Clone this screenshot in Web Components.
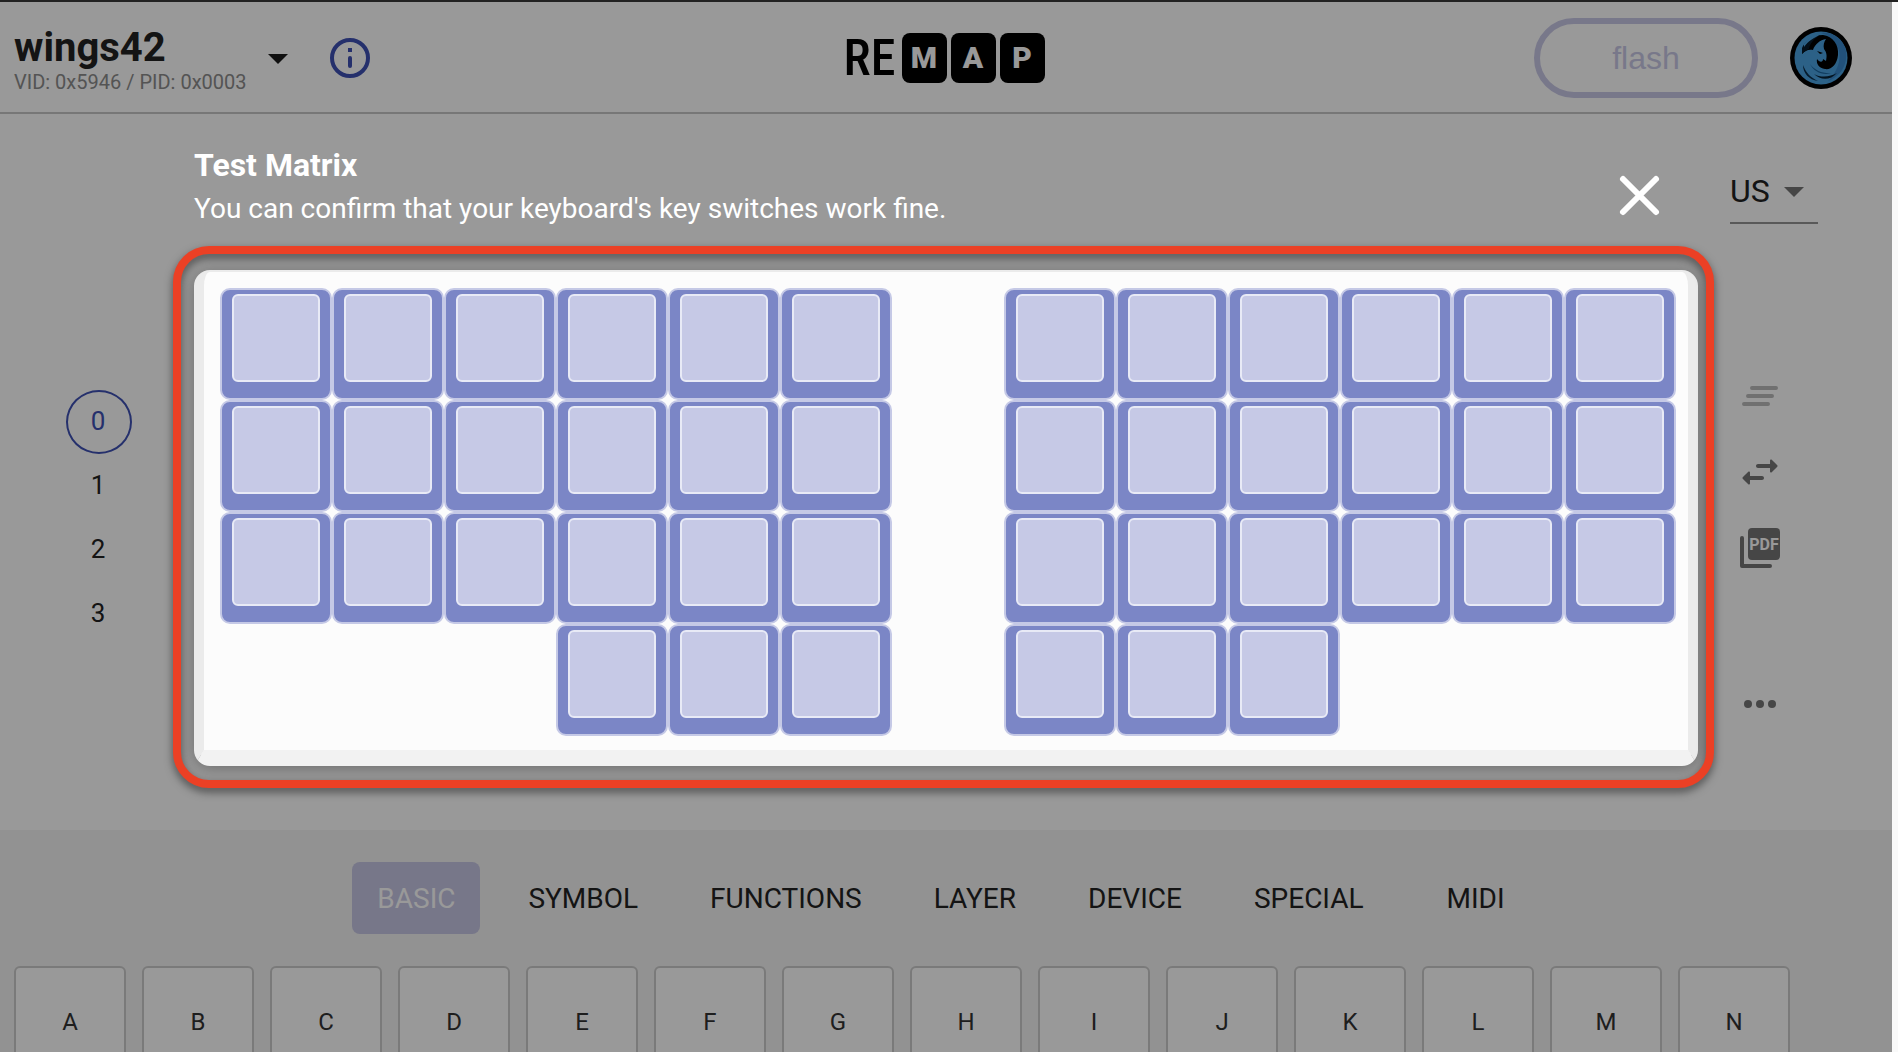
<!DOCTYPE html>
<html lang="en">
<head>
<meta charset="utf-8">
<title>Remap</title>
<style>
  html, body { margin: 0; height: 100%; background: #f9f9f9; font-family: Roboto, "Liberation Sans", sans-serif; color: #222; }
</style>
</head>
<body>
<remap-app></remap-app>

<script>
const define = (name, html, setup) => {
  const template = document.createElement('template');
  template.innerHTML = html;
  customElements.define(name, class extends HTMLElement {
    connectedCallback() {
      if (this.shadowRoot) return;
      this.attachShadow({ mode: 'open' }).append(template.content.cloneNode(true));
      if (setup) setup(this, this.shadowRoot);
    }
  });
};

define('remap-logo', `
<style>
  :host { display: flex; align-items: center; gap: 4px; color: #000; font-weight: 700; }
  .re { width: 54px; font: 500 50px/50px "Roboto Condensed", "Liberation Sans Narrow", sans-serif; }
  .tile { display: grid; place-items: center; width: 45px; height: 50px; border-radius: 8px; background: #000; color: #fff; font-size: 30px; line-height: 50px; font-weight: 900; }
</style>
<span class="re">RE</span><span class="tile">M</span><span class="tile">A</span><span class="tile">P</span>`);

define('user-avatar', `
<style>
  :host { display: block; }
  button { display: block; border: 0; padding: 0; background: none; border-radius: 50%; }
  svg { display: block; }
</style>
<button aria-label="Account">
<svg width="62" height="62" viewBox="0 0 62 62">
  <circle cx="31" cy="31" r="31" fill="#000"/>
  <circle cx="31" cy="31" r="26.5" fill="#4aa2e2"/>
  <path d="M31 6C42 4 54 12 56 24C58 38 50 50 38 54C47 45 51 34 49 24C46 13 38 8 31 6Z" fill="#3a88cc"/>
  <path d="M12 27C13 16 22 8 33 8C43 9 49 18 48 28C47 38 41 43 35 42C29 41 26 37 27 32C29 35 33 36 33 32L36 34C37 29 37 26 34 22C33 18 34 15 36 12C30 13 25 17 23 23C18 22 15 24 12 27Z" fill="#000"/>
  <path d="M12 21C15 14 22 9 30 8C24 12 20 16 19 22C16 23 14 25 12 27Z" fill="#061a2a"/>
  <path d="M27 24l6 2l-3 1z" fill="#000"/>
  <path d="M14 17C18 11 24 8 31 7C24 11 18 14 14 20Z" fill="#4aa2e2"/>
  <path d="M24 47C30 53 40 54 47 46C40 50 31 51 24 47Z" fill="#072236"/>
  <path d="M13 38C16 46 21 51 28 54C19 53 13 46 13 38Z" fill="#0b2f4c"/>
  <path d="M20 37C24 45 33 49 42 46C34 47 25 44 20 37Z" fill="#1c669f"/>
</svg></button>`);

define('app-header', `
<style>
  :host { display: grid; grid-template-columns: 1fr auto 1fr; align-items: center; box-sizing: border-box; height: 112px; padding: 2px 18px 0 14px; border-bottom: 2px solid #c6c6c6; background: #fff; }
  .device, .actions { display: flex; align-items: center; }
  .actions { justify-content: flex-end; gap: 32px; padding-right: 22px; }
  button { border: 0; padding: 0; background: none; font: inherit; color: inherit; text-align: left; }
  .picker { display: flex; align-items: center; }
  .names { display: block; min-width: 240px; padding-top: 4px; }
  .name { display: block; font-size: 40px; line-height: 44px; font-weight: 700; }
  .ids { display: block; font-size: 20px; line-height: 24px; color: #8c8c8c; }
  .info { margin-left: 24px; color: #3f51b5; }
  svg { display: block; }
  .flash { width: 224px; height: 80px; border: 6px solid #c9c8e6; border-radius: 40px; color: #c9c8e6; font: 32px/40px "Liberation Sans", Arial, sans-serif; text-align: center; }
</style>
<div class="device">
  <button class="picker">
    <span class="names"><span class="name">wings42</span><span class="ids">VID: 0x5946 / PID: 0x0003</span></span>
    <svg width="48" height="48" viewBox="0 0 24 24"><path d="M7 10l5 5 5-5z" fill="#1c1c1c"/></svg>
  </button>
  <button class="info" aria-label="Information">
    <svg width="48" height="48" viewBox="0 0 24 24" fill="none" stroke="currentColor" stroke-width="2"><circle cx="12" cy="12" r="9"/><path d="M12 12v4" stroke-linecap="round"/><path d="M11 8h2"/></svg>
  </button>
</div>
<remap-logo></remap-logo>
<div class="actions">
  <button class="flash">flash</button>
  <user-avatar></user-avatar>
</div>`);

define('layer-list', `
<style>
  :host { display: flex; flex-direction: column; }
  button { box-sizing: border-box; width: 66px; height: 64px; padding: 0 2px 2px 0; border: 2px solid transparent; border-radius: 50%; background: none; font: 26px/32px Roboto, sans-serif; color: #222; }
  button[aria-pressed=true] { border-color: #3f51b5; color: #3f51b5; }
</style>
<button aria-pressed="true">0</button><button>1</button><button>2</button><button>3</button>`);

define('side-tools', `
<style>
  :host { display: flex; flex-direction: column; width: 88px; }
  .lang { display: grid; align-items: center; margin-bottom: 148px; border-bottom: 2px solid #949494; }
  select, .lang svg { grid-area: 1 / 1; }
  select { appearance: none; width: 100%; height: 62px; padding: 0; border: 0; background: none; color: #222; font: 32px/40px Roboto, sans-serif; }
  .lang svg { justify-self: end; pointer-events: none; }
  .tools { display: flex; flex-direction: column; gap: 28px; padding-left: 6px; color: #757575; }
  button { display: block; width: 48px; height: 48px; border: 0; padding: 0; background: none; color: inherit; }
  button:disabled { color: #bbb; }
  .more { margin-top: 80px; }
  svg { display: block; }
</style>
<label class="lang">
  <select aria-label="Layout language"><option>US</option></select>
  <svg width="48" height="48" viewBox="0 0 24 24"><path d="M7 10l5 5 5-5z" fill="#757575"/></svg>
</label>
<div class="tools">
  <button disabled aria-label="Clear all"><svg width="48" height="48" viewBox="0 0 24 24" stroke="currentColor" stroke-width="2" stroke-linecap="round"><path d="M8 8h12M6 12h12M4 16h12"/></svg></button>
  <button aria-label="Swap"><svg width="48" height="48" viewBox="0 0 24 24" fill="currentColor"><path d="M6.14 11.86l-2.78 2.79c-.19.2-.19.51 0 .71l2.78 2.79c.31.32.85.09.85-.35V16H13c.55 0 1-.45 1-1s-.45-1-1-1H6.99v-1.79c0-.45-.54-.67-.85-.35zm14.51-3.21l-2.78-2.79c-.31-.32-.85-.09-.85.35V8H11c-.55 0-1 .45-1 1s.45 1 1 1h6.01v1.79c0 .45.54.67.85.35l2.78-2.79c.2-.19.2-.51.01-.7z"/></svg></button>
  <button aria-label="Export PDF"><svg width="48" height="48" viewBox="0 0 48 48"><rect x="12" y="4" width="32" height="32" rx="4" fill="currentColor"/><path d="M6 14V42H34" fill="none" stroke="currentColor" stroke-width="4" stroke-linecap="round" stroke-linejoin="round"/><text x="28" y="26" text-anchor="middle" font-family="Roboto" font-weight="700" font-size="16" fill="#fff">PDF</text></svg></button>
  <button class="more" aria-label="More"><svg width="48" height="48" viewBox="0 0 24 24" fill="currentColor"><circle cx="6" cy="12" r="2"/><circle cx="12" cy="12" r="2"/><circle cx="18" cy="12" r="2"/></svg></button>
</div>`);

define('category-tabs', `
<style>
  :host { display: flex; justify-content: center; gap: 24px; }
  button { min-width: 128px; height: 72px; padding: 2px 24px 0; border: 0; border-radius: 8px; background: none; color: #222; font: 28px/48px Roboto, sans-serif; }
  button[aria-selected=true] { background: #c6c6e4; color: #fff; }
</style>`, (host, root) => {
  host.setAttribute('role', 'tablist');
  ['BASIC', 'SYMBOL', 'FUNCTIONS', 'LAYER', 'DEVICE', 'SPECIAL', 'MIDI'].forEach((label, i) => {
    const tab = document.createElement('button');
    tab.setAttribute('role', 'tab');
    tab.setAttribute('aria-selected', i === 0);
    tab.textContent = label;
    root.append(tab);
  });
});

define('key-cap', `
<style>
  :host { display: block; }
  button { display: block; width: 112px; height: 112px; padding: 0; border: 2px solid #ccc; border-radius: 6px; background: #fff; color: #333; font: 24px/32px Roboto, sans-serif; }
</style>
<button><slot></slot></button>`);

define('key-palette', `
<style>
  :host { display: flex; flex-direction: column; gap: 32px; box-sizing: border-box; padding: 32px 14px 0; background: #f3f3f3; overflow: hidden; }
  .keys { display: flex; gap: 16px; }
</style>
<category-tabs></category-tabs>
<div class="keys"></div>`, (host, root) => {
  const keys = root.querySelector('.keys');
  for (const letter of 'ABCDEFGHIJKLMN') {
    const key = document.createElement('key-cap');
    key.textContent = letter;
    keys.append(key);
  }
});

define('switch-key', `
<style>
  :host { display: block; box-sizing: border-box; width: 112px; height: 112px; padding: 4px 10px; border: 2px solid #c5c9e6; border-radius: 10px; background: #7b86c6; }
  span { display: block; box-sizing: border-box; height: 88px; border: 2px solid #e8eaf6; border-radius: 6px; background: #c6c9e6; }
</style>
<span></span>`);

define('key-matrix', `
<style>
  :host { display: grid; position: relative; grid-template-columns: repeat(13, 112px); grid-auto-rows: 112px; padding: 16px 12px 14px 16px; border: solid; border-width: 2px 10px 16px; border-color: #ebebeb #ebebeb #f2f2f2; border-radius: 16px; background: #fcfcfc; box-shadow: 0 2px 16px rgba(0, 0, 0, .3); }
  .outline { position: absolute; inset: -26px -26px -38px -31px; border: 8px solid #eb4025; border-radius: 36px; filter: drop-shadow(0 4px 4px rgba(0, 0, 0, .5)); pointer-events: none; }
</style>
<div class="outline"></div>`, (host, root) => {
  const rows = ['111111.111111', '111111.111111', '111111.111111', '...111.111...'];
  rows.forEach((row, r) => [...row].forEach((cell, c) => {
    if (cell === '.') return;
    const key = document.createElement('switch-key');
    key.style.gridArea = `${r + 1} / ${c + 1}`;
    root.append(key);
  }));
});

define('test-dialog', `
<style>
  :host { display: flex; justify-content: center; align-items: flex-start; background: rgba(0, 0, 0, .4); color: #fff; }
  section { display: grid; gap: 37px; padding-top: 143px; }
  header { display: flex; justify-content: space-between; align-items: flex-end; padding-right: 28px; }
  h2, p { margin: 0; }
  h2 { font-size: 32px; line-height: 40px; font-weight: 700; }
  p { font-size: 28px; line-height: 48px; }
  button { border: 0; padding: 0; background: none; color: #fff; }
  svg { display: block; }
</style>
<section role="dialog" aria-labelledby="title">
  <header>
    <div><h2 id="title">Test Matrix</h2><p>You can confirm that your keyboard's key switches work fine.</p></div>
    <button aria-label="Close"><svg width="62" height="76" viewBox="0 0 62 76" stroke="currentColor" stroke-width="6" stroke-linecap="round"><path d="M15 22l33 33M48 22L15 55"/></svg></button>
  </header>
  <key-matrix></key-matrix>
</section>`);

define('remap-app', `
<style>
  :host { display: block; box-sizing: border-box; height: 100vh; padding-right: 6px; border-top: 2px solid #222; overflow: hidden; }
  .page { display: flex; flex-direction: column; position: relative; height: 100%; background: #fff; }
  main { display: flex; flex: 1; justify-content: space-between; align-items: flex-start; padding: 0 74px 0 66px; }
  layer-list { padding-top: 276px; }
  side-tools { padding-top: 46px; }
  key-palette { flex: 0 0 222px; }
  test-dialog { position: absolute; inset: 0; }
</style>
<div class="page">
  <app-header></app-header>
  <main><layer-list></layer-list><side-tools></side-tools></main>
  <key-palette></key-palette>
  <test-dialog></test-dialog>
</div>`);
</script>
</body>
</html>
